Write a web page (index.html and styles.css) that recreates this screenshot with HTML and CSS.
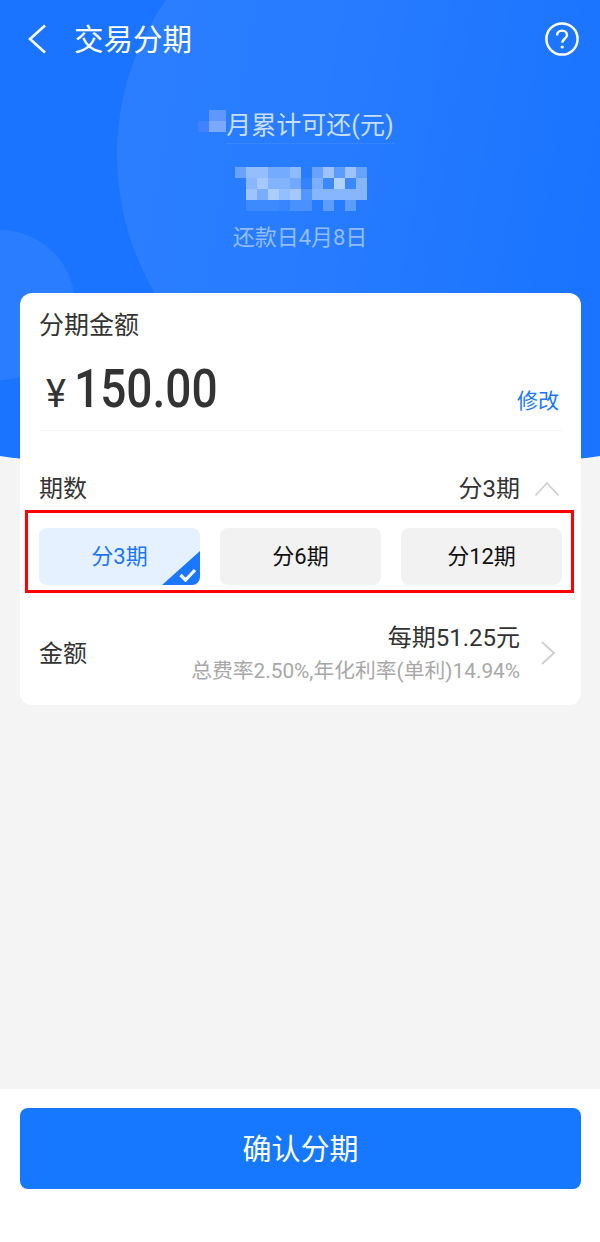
FILE: index.html
```html
<!DOCTYPE html>
<html lang="zh-CN">
<head>
  <meta charset="UTF-8">
  <meta name="viewport" content="width=device-width, initial-scale=1.0">
  <title>交易分期</title>
  <link rel="stylesheet" href="styles.css">
</head>
<body>
  <div class="page">
    <div class="hero">
      <div class="circle-big"></div>
      <div class="circle-small"></div>
    </div>

    <header class="topbar">
      <svg class="back" width="20" height="30" viewBox="0 0 20 30"><path d="M18 1.5 L3 15 L18 28.5" fill="none" stroke="#fff" stroke-width="2.6"/></svg>
      <h1>交易分期</h1>
      <svg class="help" width="36" height="36" viewBox="0 0 36 36">
        <circle cx="18" cy="18" r="15.6" fill="none" stroke="#fff" stroke-width="2.5"/>
        <path d="M13 14.6 C13 11.4 15.2 9.6 18 9.6 C20.9 9.6 23 11.5 23 14.2 C23 17.6 18.2 18 18.2 21.8" fill="none" stroke="#fff" stroke-width="2.4"/>
        <circle cx="18.2" cy="26" r="1.6" fill="#fff"/>
      </svg>
    </header>

    <section class="summary">
      <div class="summary-label">
        <svg class="mosaic-small" width="28" height="22" viewBox="0 0 28 22" shape-rendering="crispEdges">
          <rect x="11" y="0" width="17" height="11" fill="#5f97ff"/>
          <rect x="0" y="11" width="11" height="11" fill="#3f82ff"/>
          <rect x="11" y="11" width="17" height="11" fill="#7ca9ff"/>
        </svg>
        <span class="label-text">月累计可还(元)</span>
      </div>
      <svg class="mosaic" width="133" height="44" viewBox="0 0 12 4" shape-rendering="crispEdges">
        <g fill="#fff">
          <rect x="0" y="0" width="1" height="1" opacity=".3"/>
          <rect x="1" y="0" width="2" height="1" opacity=".5"/>
          <rect x="3" y="0" width="2" height="1" opacity=".36"/>
          <rect x="5" y="0" width="1" height="1" opacity=".48"/>
          <rect x="7" y="0" width="1" height="1" opacity=".3"/>
          <rect x="8" y="0" width="1" height="1" opacity=".55"/>
          <rect x="9" y="0" width="1" height="1" opacity=".25"/>
          <rect x="10" y="0" width="1" height="1" opacity=".55"/>
          <rect x="11" y="0" width="1" height="1" opacity=".3"/>

          <rect x="1" y="1" width="1" height="1" opacity=".45"/>
          <rect x="2" y="1" width="1" height="1" opacity=".58"/>
          <rect x="3" y="1" width="2" height="1" opacity=".42"/>
          <rect x="5" y="1" width="1" height="1" opacity=".35"/>
          <rect x="6" y="1" width="1" height="1" opacity=".06"/>
          <rect x="7" y="1" width="1" height="1" opacity=".4"/>
          <rect x="8" y="1" width="1" height="1" opacity=".1"/>
          <rect x="9" y="1" width="1" height="1" opacity=".65"/>
          <rect x="10" y="1" width="1" height="1" opacity=".1"/>
          <rect x="11" y="1" width="1" height="1" opacity=".45"/>

          <rect x="1" y="2" width="1" height="1" opacity=".55"/>
          <rect x="2" y="2" width="1" height="1" opacity=".38"/>
          <rect x="3" y="2" width="1" height="1" opacity=".62"/>
          <rect x="4" y="2" width="1" height="1" opacity=".5"/>
          <rect x="5" y="2" width="1" height="1" opacity=".58"/>
          <rect x="6" y="2" width="1" height="1" opacity=".2"/>
          <rect x="7" y="2" width="5" height="1" opacity=".45"/>

          <rect x="1" y="3" width="3" height="1" opacity=".1"/>
          <rect x="4" y="3" width="1" height="1" opacity=".08"/>
          <rect x="5" y="3" width="2" height="1" opacity=".16"/>
          <rect x="8" y="3" width="1" height="1" opacity=".25"/>
          <rect x="10" y="3" width="1" height="1" opacity=".25"/>
        </g>
      </svg>
      <div class="due">还款日4月8日</div>
    </section>

    <main class="card">
      <div class="card-title">分期金额</div>
      <div class="amount-row">
        <div class="amount"><span class="yen">¥</span><span class="digits">150.00</span></div>
        <a class="edit">修改</a>
      </div>

      <div class="row term-row">
        <span>期数</span>
        <span class="term-value">分3期
          <svg width="26" height="16" viewBox="0 0 26 16"><path d="M1.5 14.5 L13 2 L24.5 14.5" fill="none" stroke="#cfcfcf" stroke-width="1.8"/></svg>
        </span>
      </div>

      <div class="term-box">
        <div class="term selected"><span class="term-text">分3期</span>
          <svg class="tick" width="38" height="34" viewBox="0 0 38 34">
            <path d="M38 0 V26 A8 8 0 0 1 30 34 H0 Z" fill="#1a77ff"/>
            <path d="M18.5 24 L23.5 29 L33 19" fill="none" stroke="#fff" stroke-width="3.2"/>
          </svg>
        </div>
        <div class="term"><span class="term-text">分6期</span></div>
        <div class="term"><span class="term-text">分12期</span></div>
      </div>

      <div class="row money-row">
        <span class="money-label">金额</span>
        <div class="money-right">
          <div class="money-text">
            <div class="per">每期51.25元</div>
            <div class="rate">总费率2.50%,年化利率(单利)14.94%</div>
          </div>
          <svg class="money-arrow" width="16" height="26" viewBox="0 0 16 26"><path d="M2 2 L14 13 L2 24" fill="none" stroke="#cfcfcf" stroke-width="1.8"/></svg>
        </div>
      </div>
    </main>

    <footer class="bottom">
      <button class="confirm">确认分期</button>
    </footer>
  </div>
</body>
</html>
```

FILE: styles.css
```css
* {
  box-sizing: border-box;
}

body {
  margin: 0;
  font-family: "Roboto", "Noto Sans CJK SC", sans-serif;
  background: #f4f4f4;
}

.page {
  position: relative;
  width: 600px;
  height: 1242px;
  overflow: hidden;
  display: flex;
  flex-direction: column;
}

/* blue background behind the top of the page */
.hero {
  position: absolute;
  left: -100px;
  top: -340px;
  width: 800px;
  height: 813px;
  border-radius: 0 0 50% 50% / 0 0 50px 50px;
  background: #1a74ff;
  overflow: hidden;
}

.circle-big {
  position: absolute;
  left: 217px;
  top: 225px;
  width: 540px;
  height: 540px;
  border-radius: 50%;
  background: linear-gradient(100deg, rgba(255, 255, 255, 0.08), rgba(255, 255, 255, 0.05) 45%, rgba(255, 255, 255, 0) 85%);
}

.circle-small {
  position: absolute;
  left: 25px;
  top: 570px;
  width: 150px;
  height: 150px;
  border-radius: 50%;
  background: rgba(255, 255, 255, 0.07);
}

.topbar {
  position: relative;
  display: flex;
  align-items: center;
  height: 78px;
  padding: 0 20px 0 27px;
}

.topbar h1 {
  margin: 0 0 0 27px;
  padding-bottom: 4px;
  flex: 1;
  font-size: 29.5px;
  font-weight: 400;
  color: #fff;
}

.summary {
  position: relative;
  height: 215px;
  display: flex;
  flex-direction: column;
  align-items: center;
}

.summary-label {
  display: flex;
  align-items: center;
  margin-top: 31px;
  margin-left: -8px;
  height: 30px;
  font-size: 25px;
  color: rgba(255, 255, 255, 0.75);
}

.mosaic-small {
  margin-bottom: 6px;
}

.label-text {
  padding-bottom: 2px;
  border-bottom: 1px solid rgba(255, 255, 255, 0.08);
}

.mosaic {
  display: block;
  margin-top: 28px;
}

.due {
  margin-top: 8px;
  font-size: 22px;
  color: rgba(255, 255, 255, 0.5);
}

.card {
  position: relative;
  margin: 0 19px 0 20px;
  height: 412px;
  padding: 0 19px;
  background: #fff;
  border-radius: 12px;
}

.card-title {
  padding-top: 17px;
  font-size: 25px;
  line-height: 32px;
  color: #333;
}

.amount-row {
  display: flex;
  justify-content: space-between;
  align-items: flex-end;
  height: 89px;
  padding-bottom: 5px;
  border-bottom: 1px solid #f5f5f5;
}

.amount {
  display: flex;
  align-items: baseline;
  padding-left: 7px;
  line-height: 62px;
  color: #333;
}

.yen {
  margin-right: 8px;
  font-size: 38px;
}

.digits {
  display: inline-block;
  font-size: 53.5px;
  font-weight: 500;
  transform: scaleX(0.86);
  transform-origin: left;
}

.edit {
  margin: 0 3px 11px 0;
  font-size: 21px;
  color: #1a77ff;
}

.row {
  display: flex;
  justify-content: space-between;
  align-items: center;
  font-size: 24px;
  color: #333;
}

.term-row {
  height: 79px;
  padding-top: 32px;
}

.term-value {
  display: flex;
  align-items: center;
  gap: 14px;
}

.term-value svg {
  margin: 4px 2px 0 0;
}

.term-box {
  display: flex;
  justify-content: space-between;
  margin: 0 -12px 0 -14px;
  height: 83px;
  padding: 15px 9px 0 11px;
  border: 3px solid #f00;
}

.term {
  position: relative;
  width: 161px;
  height: 57px;
  display: flex;
  align-items: center;
  justify-content: center;
  background: #f2f2f2;
  border-radius: 8px;
  font-size: 22px;
  color: #111;
}

.term-text {
  padding-bottom: 5px;
}

.term.selected {
  background: #e6f1ff;
  color: #1a77ff;
}

.tick {
  position: absolute;
  right: 0;
  bottom: 0;
}

.money-row {
  height: 100px;
  margin-top: 10px;
}

.money-label {
  margin-bottom: 4px;
}

.money-right {
  display: flex;
  align-items: center;
  gap: 20px;
}

.money-text {
  text-align: right;
}

.money-arrow {
  margin-right: 6px;
}

.per {
  font-size: 24px;
  line-height: 36px;
}

.rate {
  font-size: 20.8px;
  line-height: 30px;
  color: #a8a8a8;
}

.bottom {
  position: absolute;
  left: 0;
  right: 0;
  bottom: 0;
  height: 153px;
  padding: 19px 19px 0 20px;
  background: #fff;
}

.confirm {
  width: 100%;
  height: 81px;
  padding: 0 0 3px;
  border: none;
  border-radius: 8px;
  background: #1677ff;
  color: #fff;
  font-family: inherit;
  font-size: 29px;
}
```
